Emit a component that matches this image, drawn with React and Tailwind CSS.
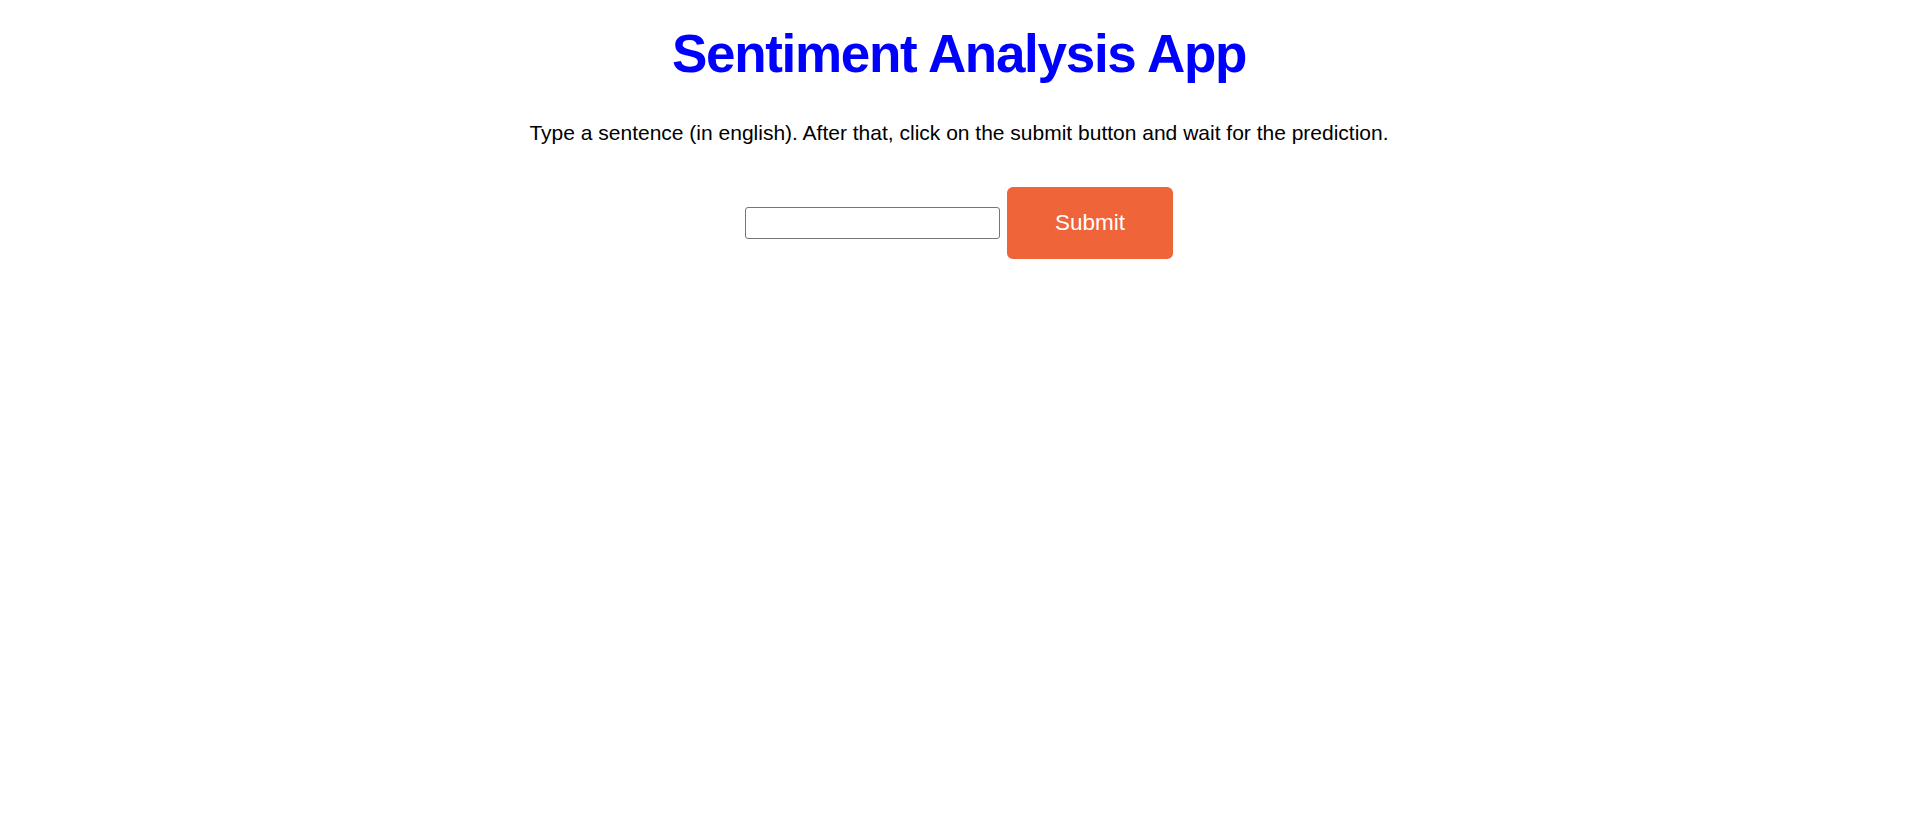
export default function App() {
  return (
    <div
      className="min-h-[813px] w-full bg-white flex flex-col items-center text-center"
      style={{ fontFamily: '"Liberation Sans", Arial, sans-serif' }}
    >
      <h1 className="mt-[27px] text-[53px] leading-none font-bold tracking-[-1.3px] text-[#0000ff]">
        Sentiment Analysis App
      </h1>
      <p className="mt-[41px] text-[21px] leading-[24px] text-black">
        Type a sentence (in english). After that, click on the submit button and wait for the prediction.
      </p>
      <form
        className="mt-[42px] flex items-center gap-[7px]"
        onSubmit={(e) => e.preventDefault()}
      >
        <input
          type="text"
          className="h-[32px] w-[255px] rounded-[3px] border border-[#767676] bg-white px-[2px] text-[16px]"
        />
        <button
          type="submit"
          className="flex h-[72px] w-[166px] items-center justify-center rounded-[6px] bg-[#f0643a] text-[22.5px] text-white"
        >
          Submit
        </button>
      </form>
    </div>
  );
}
